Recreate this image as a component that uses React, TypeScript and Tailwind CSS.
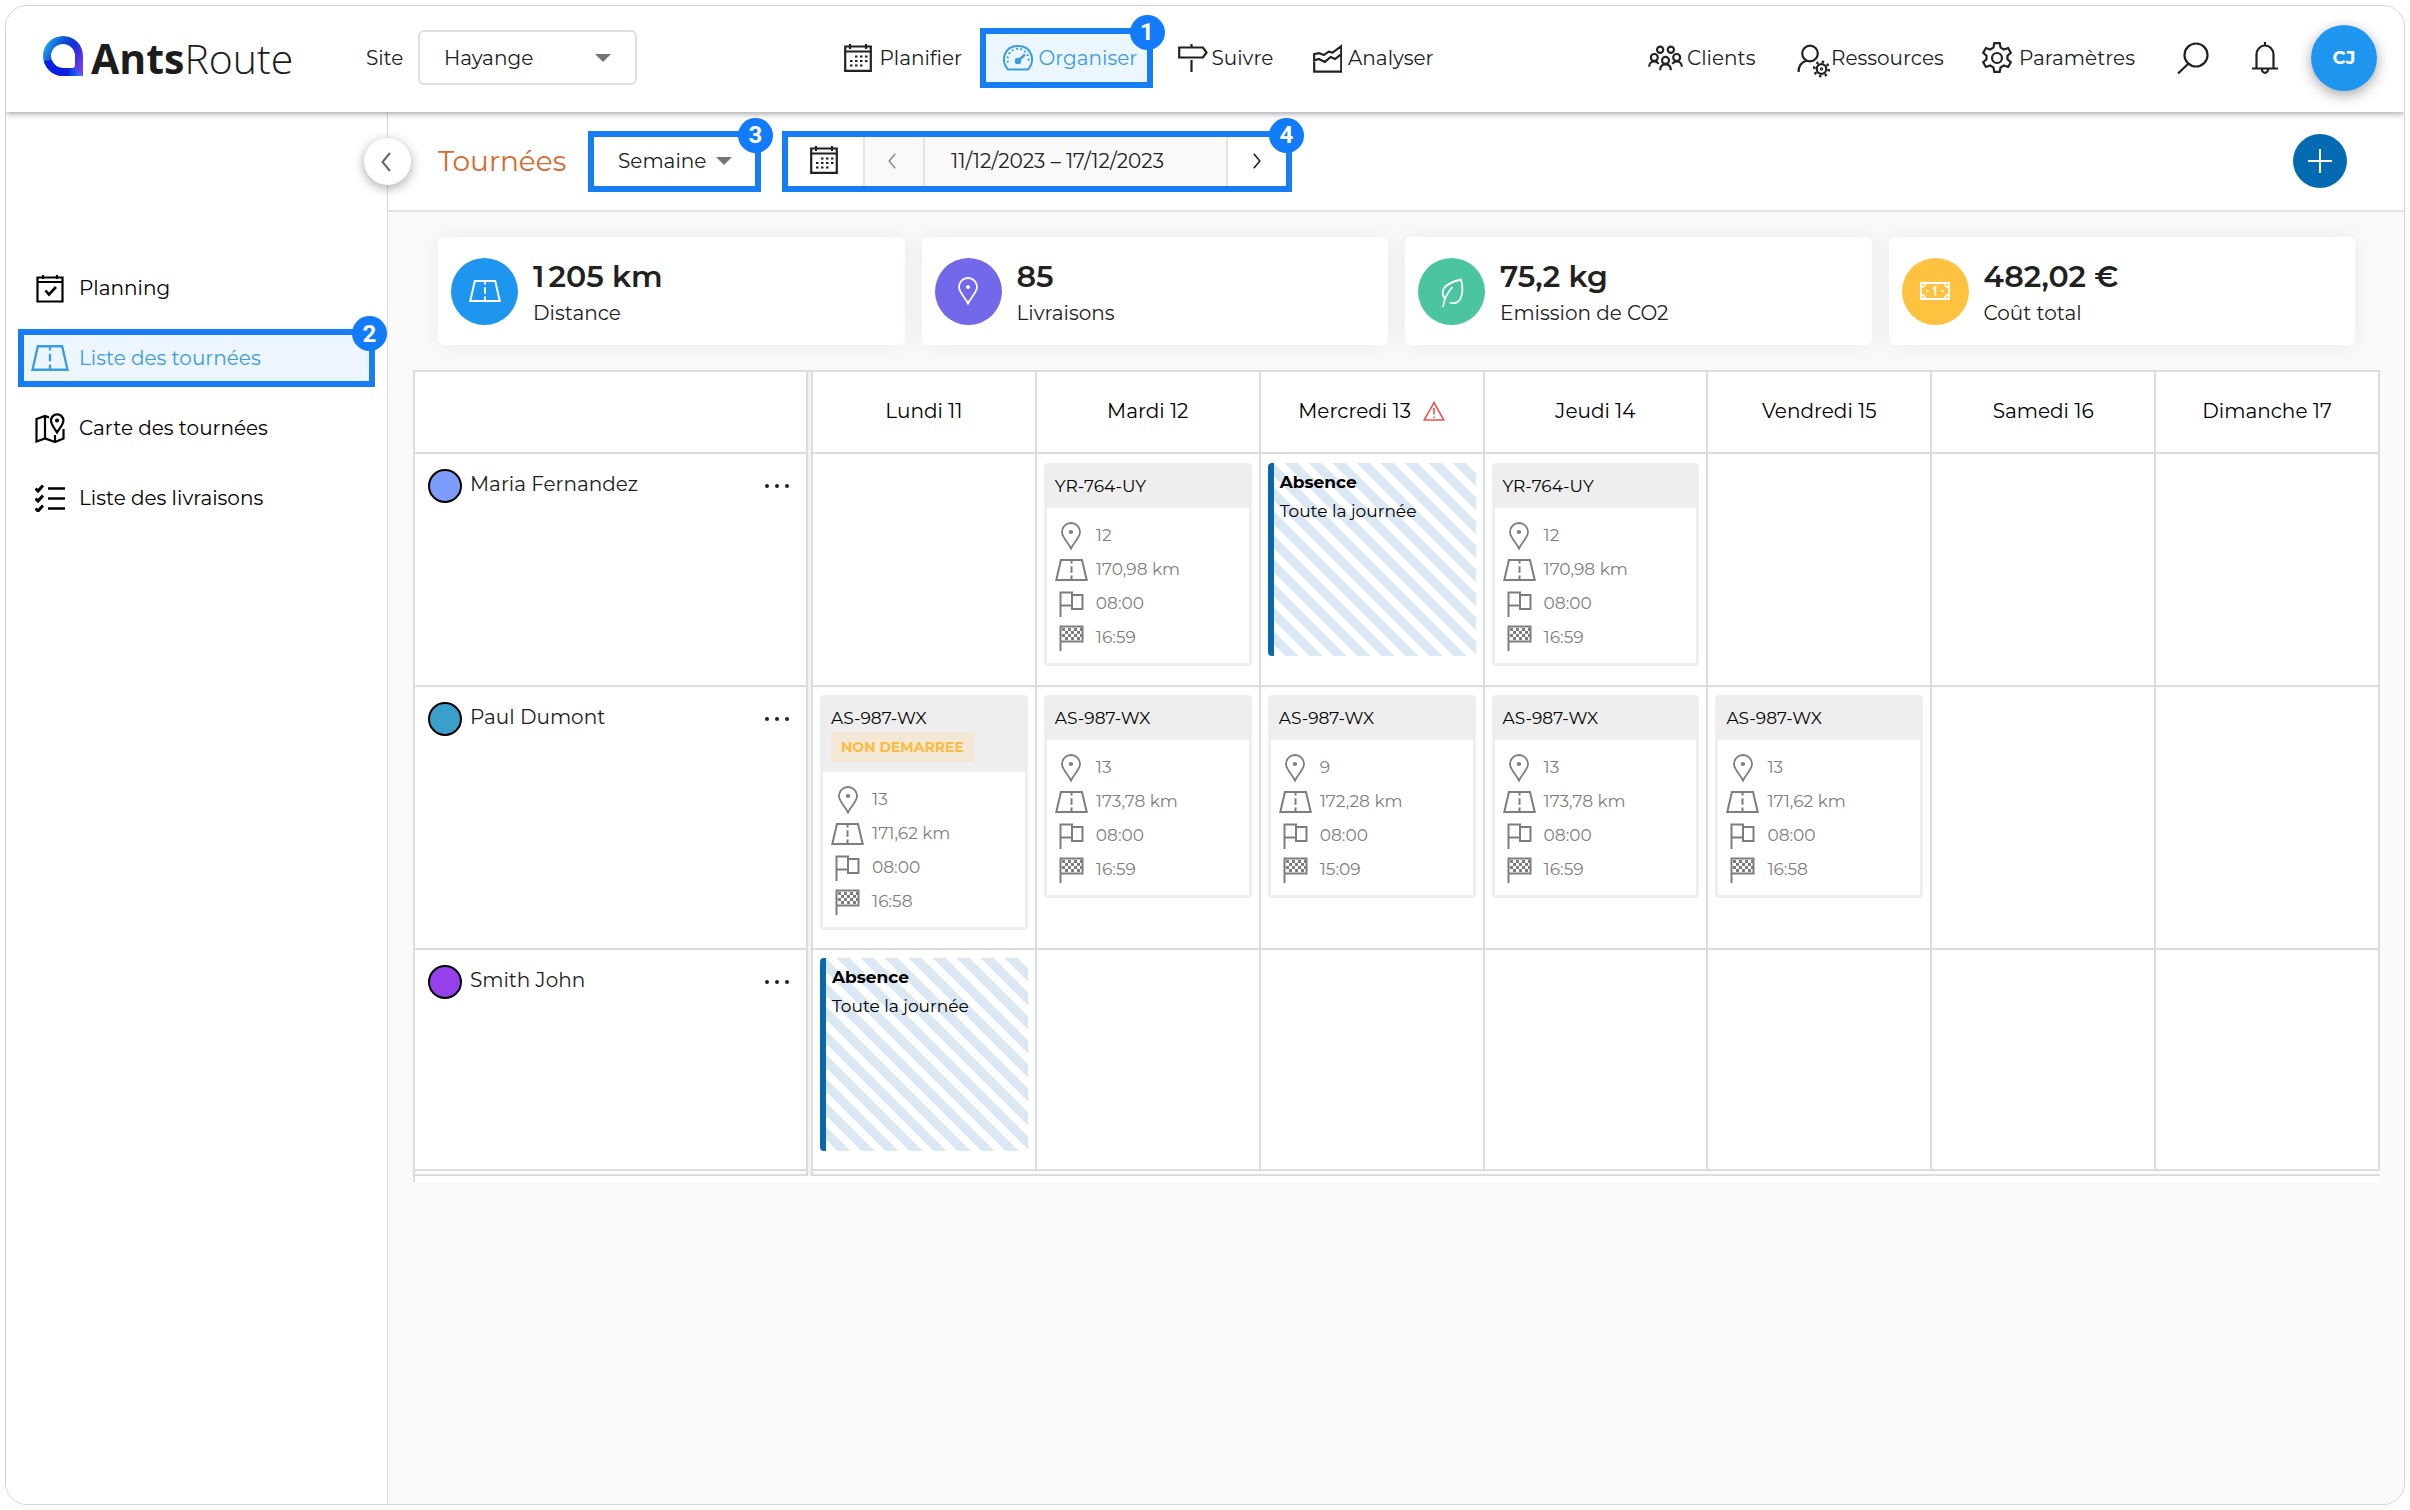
import type { ReactNode } from "react";
import clsx from "clsx";

type Tour = {
  kind: "tour";
  plate: string;
  badge?: string;
  stops: string;
  distance: string;
  start: string;
  end: string;
};

type Absence = { kind: "absence" };

type Driver = {
  name: string;
  dot: string;
  days: (Tour | Absence | null)[];
};

const tour = (plate: string, stops: string, distance: string, end: string, badge?: string): Tour => ({
  kind: "tour",
  plate,
  stops,
  distance,
  start: "08:00",
  end,
  badge,
});

const days = ["Lundi 11", "Mardi 12", "Mercredi 13", "Jeudi 14", "Vendredi 15", "Samedi 16", "Dimanche 17"];

const drivers: Driver[] = [
  {
    name: "Maria Fernandez",
    dot: "bg-[#7b9cfb]",
    days: [
      null,
      tour("YR-764-UY", "12", "170,98 km", "16:59"),
      { kind: "absence" },
      tour("YR-764-UY", "12", "170,98 km", "16:59"),
      null,
      null,
      null,
    ],
  },
  {
    name: "Paul Dumont",
    dot: "bg-[#3a9fcb]",
    days: [
      tour("AS-987-WX", "13", "171,62 km", "16:58", "NON DEMARREE"),
      tour("AS-987-WX", "13", "173,78 km", "16:59"),
      tour("AS-987-WX", "9", "172,28 km", "15:09"),
      tour("AS-987-WX", "13", "173,78 km", "16:59"),
      tour("AS-987-WX", "13", "171,62 km", "16:58"),
      null,
      null,
    ],
  },
  {
    name: "Smith John",
    dot: "bg-[#9540ea]",
    days: [{ kind: "absence" }, null, null, null, null, null, null],
  },
];

const stats = [
  { value: "1\u202f205 km", label: "Distance", color: "bg-[#1e96f0]", icon: <RoadIcon className="h-[22px] w-8" /> },
  { value: "85", label: "Livraisons", color: "bg-[#7367ea]", icon: <PinIcon className="h-7 w-5" /> },
  { value: "75,2 kg", label: "Emission de CO2", color: "bg-[#4bc4a0]", icon: <LeafIcon /> },
  { value: "482,02 €", label: "Coût total", color: "bg-[#fec240]", icon: <MoneyIcon /> },
];

export default function App() {
  return (
    <div className="flex min-h-screen bg-white p-[5px] font-[Montserrat,Inter,sans-serif] text-xl text-[#212121]">
      <div className="flex min-w-0 flex-1 flex-col overflow-hidden rounded-[22px] border border-[#d2d2d2]">
        <Header />
        <div className="flex flex-1">
          <Sidebar />
          <main className="flex min-w-0 flex-1 flex-col bg-[#fafafa]">
            <Toolbar />
            <div className="pt-[25px] pr-6 pl-[25px]">
              <section className="grid grid-cols-4 gap-[17px] px-[25px]">
                {stats.map((stat) => (
                  <div
                    key={stat.label}
                    className="flex h-[108px] items-center gap-[15px] rounded-md bg-white px-[13px] shadow-[0_0_24px_rgba(34,41,60,0.08)]"
                  >
                    <span
                      className={clsx(
                        "flex size-[67px] shrink-0 items-center justify-center rounded-full text-white",
                        stat.color,
                      )}
                    >
                      {stat.icon}
                    </span>
                    <div className="pt-[7px]">
                      <p className="text-[30px] leading-9 font-semibold">{stat.value}</p>
                      <p className="leading-9">{stat.label}</p>
                    </div>
                  </div>
                ))}
              </section>
              <Schedule />
            </div>
          </main>
        </div>
      </div>
    </div>
  );
}

function Header() {
  return (
    <header className="relative z-20 flex h-[106px] shrink-0 items-center justify-between bg-white pr-[27px] pb-[3px] pl-[37px] shadow-[0_2px_6px_rgba(0,0,0,0.35)]">
      <div className="flex items-center">
        <a href="#" className="flex w-[323px] items-center gap-2">
          <LogoMark />
          <span className="pt-0.5 font-['Open_Sans',sans-serif] text-[41px] leading-none text-[#1c1c1c]">
            <span className="font-bold">Ants</span>
            <span className="font-light">Route</span>
          </span>
        </a>
        <label htmlFor="site" className="w-[52px]">
          Site
        </label>
        <span className="relative">
          <select
            id="site"
            className="h-[55px] w-[219px] appearance-none rounded-md border-2 border-[#dfdfdf] bg-white pl-6 outline-none"
          >
            <option>Hayange</option>
          </select>
          <Caret className="pointer-events-none absolute top-6 right-[26px]" />
        </span>
      </div>

      <nav className="mr-2 flex items-center">
        <NavLink className="w-[136px] gap-2" icon={<CalendarIcon className="size-7" />}>
          Planifier
        </NavLink>
        <NavLink
          className="relative mr-[25px] h-[60px] w-[173px] gap-1.5 border-[6px] border-[#167df5] bg-[#ebf6fe] pl-[17px] text-[#3b9be0]"
          icon={<GaugeIcon />}
        >
          Organiser
          <Marker>1</Marker>
        </NavLink>
        <NavLink className="w-[135px] gap-1" icon={<SignpostIcon />}>
          Suivre
        </NavLink>
        <NavLink className="w-[121px] gap-1.5" icon={<AreaIcon />}>
          Analyser
        </NavLink>
      </nav>

      <nav className="flex items-center">
        <NavLink className="w-[149px] gap-1" icon={<GroupIcon />}>
          Clients
        </NavLink>
        <NavLink className="w-[184px]" icon={<UserCogIcon />}>
          Ressources
        </NavLink>
        <NavLink className="w-[196px] gap-1.5" icon={<GearIcon />}>
          Paramètres
        </NavLink>
        <button type="button" aria-label="Rechercher" className="w-[75px]">
          <svg viewBox="0 0 32 32" className="size-8" fill="none" stroke="currentColor" strokeWidth="2.2">
            <circle cx="19" cy="13" r="11.5" />
            <path d="M11.5 21.5 1 31.5" />
          </svg>
        </button>
        <button type="button" aria-label="Notifications" className="w-[59px]">
          <svg viewBox="0 0 26 32" className="h-8 w-[26px]" fill="none" stroke="currentColor" strokeWidth="2.2">
            <path d="M13 0v3M4.5 26V12.500a8.500 9 0 0 1 17 0V26M0 26.500h26M10 27.500a3 3.300 0 0 0 6 0" />
          </svg>
        </button>
        <button
          type="button"
          className="size-[66px] rounded-full bg-[#1e96f0] text-lg font-bold text-white shadow-[0_4px_14px_rgba(0,0,0,0.35)]"
        >
          CJ
        </button>
      </nav>
    </header>
  );
}

function NavLink({ icon, className, children }: { icon: ReactNode; className?: string; children: ReactNode }) {
  return (
    <a href="#" className={clsx("flex items-center whitespace-nowrap", className)}>
      {icon}
      {children}
    </a>
  );
}

function Marker({ children }: { children: ReactNode }) {
  return (
    <span className="absolute -top-[19px] -right-[18px] z-10 flex size-[35px] items-center justify-center rounded-full bg-[#127bfa] font-[Roboto,sans-serif] text-2xl leading-none font-bold text-white">
      {children}
    </span>
  );
}

function Sidebar() {
  const itemClassName = "flex h-[58px] items-center gap-2.5 border-[6px] pl-[7px]";

  return (
    <aside className="relative w-[382px] shrink-0 border-r border-[#dcdcdc] bg-white pt-[147px] pr-3 pl-3">
      <button
        type="button"
        aria-label="Replier le menu"
        className="absolute top-[26px] -right-6 z-10 flex size-[47px] items-center justify-center rounded-full bg-white pr-1 text-[#666] shadow-[0_3px_12px_rgba(0,0,0,0.35)]"
      >
        <Chevron className="h-5 w-2.5" />
      </button>
      <nav className="flex flex-col gap-3 text-black">
        <a href="#" className={clsx(itemClassName, "border-transparent")}>
          <SideIcon>
            <svg viewBox="0 0 28 29" className="h-[29px] w-7" fill="none" stroke="currentColor" strokeWidth="2.2">
              <path d="M1.500 3.500h25v24h-25zM1.500 8h25M7 1v4M21 1v4" />
              <path d="m9.500 16.500 3.500 4 7-7.500" strokeWidth="2.600" />
            </svg>
          </SideIcon>
          Planning
        </a>
        <a href="#" className={clsx(itemClassName, "relative border-[#167df5] bg-[#edf6fe] text-[#3b9be0]")}>
          <SideIcon>
            <RoadIcon className="h-[26px] w-[38px]" />
          </SideIcon>
          Liste des tournées
          <Marker>2</Marker>
        </a>
        <a href="#" className={clsx(itemClassName, "border-transparent")}>
          <SideIcon>
            <svg viewBox="0 0 30 30" className="size-[30px]" fill="none" stroke="currentColor" strokeWidth="2.200">
              <path d="M14 4.500 10 3 1.500 6v22.500L10 25.500l10 3.500 8.500-3.500V16M10 3v22.500M20 22v7" />
              <path d="M22 19.500c-3-5-6-8-6-12a6.200 6.200 0 0 1 12.400 0c0 4-3.400 7-6.400 12z" />
              <circle cx="22" cy="7.500" r="1" fill="currentColor" />
            </svg>
          </SideIcon>
          Carte des tournées
        </a>
        <a href="#" className={clsx(itemClassName, "border-transparent")}>
          <SideIcon>
            <svg viewBox="0 0 30 28" className="h-7 w-[30px]" fill="none" stroke="currentColor" strokeWidth="2.600">
              <path d="M13 4.500h17M13 14.500h17M13 24.500h17" />
              <path d="m.5 4.500 2.500 2.500L8 1.500M.5 14.500 3 17l5-5.500M.5 24.500 3 27l5-5.500" strokeWidth="3" />
            </svg>
          </SideIcon>
          Liste des livraisons
        </a>
      </nav>
    </aside>
  );
}

function SideIcon({ children }: { children: ReactNode }) {
  return <span className="flex w-[38px] shrink-0 justify-center">{children}</span>;
}

function Toolbar() {
  return (
    <div className="flex h-[100px] shrink-0 items-center border-b-2 border-[#e2e2e2] bg-white pr-[57px] pl-[50px]">
      <h1 className="w-[150px] pt-0.5 text-[28px] text-[#d9692f]">Tournées</h1>

      <div className="relative h-[61px] w-[173px] border-[6px] border-[#167df5]">
        <select aria-label="Période" className="size-full appearance-none bg-white pl-6 outline-none">
          <option>Semaine</option>
        </select>
        <Caret className="pointer-events-none absolute top-5 right-[23px]" />
        <Marker>3</Marker>
      </div>

      <div className="relative ml-[21px] flex h-[61px] w-[510px] border-[6px] border-[#167df5]">
        <button type="button" aria-label="Calendrier" className="flex w-[75px] items-center justify-center pr-1 pb-0.5">
          <CalendarIcon className="size-7" />
        </button>
        <button
          type="button"
          aria-label="Semaine précédente"
          className="flex w-[62px] items-center justify-center border-x-2 border-[#e4e4e4] bg-[#f9f9f9] pr-1 text-[#8c8c8c]"
        >
          <Chevron className="h-4 w-2.5" />
        </button>
        <button type="button" className="flex-1 border-r-2 border-[#e4e4e4] bg-[#f9f9f9] pr-9">
          11/12/2023 – 17/12/2023
        </button>
        <button type="button" aria-label="Semaine suivante" className="flex w-[58px] items-center justify-center">
          <Chevron className="h-4 w-2.5 rotate-180" />
        </button>
        <Marker>4</Marker>
      </div>

      <button
        type="button"
        aria-label="Ajouter une tournée"
        className="ml-auto flex size-[54px] items-center justify-center rounded-full bg-[#046ab1] text-white"
      >
        <svg viewBox="0 0 24 24" className="size-6" fill="none" stroke="currentColor" strokeWidth="2">
          <path d="M12 0v24M0 12h24" />
        </svg>
      </button>
    </div>
  );
}

function Schedule() {
  return (
    <div className="mt-[25px] border-t-2 border-l-2 border-[#dcdcdc] bg-white pb-1.5">
      <table className="w-full table-fixed border-separate border-spacing-0">
        <colgroup>
          <col className="w-[391px]" />
          <col className="w-[7px]" />
        </colgroup>
        <thead>
          <tr className="h-[82px]">
            <td className="border-b-2 border-[#dcdcdc]" />
            <Gutter />
            {days.map((day) => (
              <th
                key={day}
                scope="col"
                className="border-r-2 border-b-2 border-[#dcdcdc] pb-0.5 font-normal text-black"
              >
                <span className="flex items-center justify-center gap-3">
                  {day}
                  {day === "Mercredi 13" && <WarningIcon />}
                </span>
              </th>
            ))}
          </tr>
        </thead>
        <tbody>
          {drivers.map((driver) => (
            <tr key={driver.name} className="group align-top">
              <th scope="row" className="border-b-2 border-[#dcdcdc] pt-[15px] pr-[17px] pl-[13px] text-left font-normal">
                <div className="flex items-center gap-2">
                  <span className={clsx("size-[34px] shrink-0 rounded-full border-2 border-black", driver.dot)} />
                  <span className="pb-1">{driver.name}</span>
                  <button type="button" aria-label={`Options ${driver.name}`} className="ml-auto">
                    <svg viewBox="0 0 24 6" className="h-1.5 w-6" fill="currentColor">
                      <circle cx="2" cy="3" r="2" />
                      <circle cx="12" cy="3" r="2" />
                      <circle cx="22" cy="3" r="2" />
                    </svg>
                  </button>
                </div>
              </th>
              <Gutter />
              {driver.days.map((entry, i) => (
                <td
                  key={days[i]}
                  className="border-r-2 border-b-2 border-[#dcdcdc] px-[7px] pt-2 pb-[18px] group-first:pt-[9px] group-first:pb-[19px]"
                >
                  {entry?.kind === "tour" && <TourCard tour={entry} />}
                  {entry?.kind === "absence" && <AbsenceCard />}
                </td>
              ))}
            </tr>
          ))}
          <tr className="h-[5px]" aria-hidden="true">
            <td className="border-b-2 border-[#dcdcdc]" />
            <Gutter />
            <td colSpan={7} className="border-b-2 border-[#dcdcdc]" />
          </tr>
        </tbody>
      </table>
    </div>
  );
}

function Gutter() {
  return <td className="border-x-2 border-[#dcdcdc] bg-[#f2f2f2] p-0" />;
}

function TourCard({ tour }: { tour: Tour }) {
  return (
    <article className="rounded-sm border-[3px] border-[#eee] bg-white text-[17px]">
      <div className="bg-[#eee] px-2 pt-2 pb-2.5 text-black">
        <p className="leading-6">{tour.plate}</p>
        {tour.badge && (
          <p className="mt-0.5 inline-flex h-[30px] items-center bg-[#f3e8d5] px-2.5 text-sm font-bold text-[#fbbc42]">
            {tour.badge}
          </p>
        )}
      </div>
      <ul className="pt-[11px] pb-2 pl-2 text-[#7d7d7d]">
        <TourLine icon={<PinIcon className="h-7 w-5" />}>{tour.stops}</TourLine>
        <TourLine icon={<RoadIcon className="h-[22px] w-[33px]" />}>{tour.distance}</TourLine>
        <TourLine icon={<FlagIcon />}>{tour.start}</TourLine>
        <TourLine icon={<FinishIcon />}>{tour.end}</TourLine>
      </ul>
    </article>
  );
}

function TourLine({ icon, children }: { icon: ReactNode; children: ReactNode }) {
  return (
    <li className="flex h-[34px] items-center gap-2">
      <span className="flex w-[33px] justify-center">{icon}</span>
      {children}
    </li>
  );
}

function AbsenceCard() {
  return (
    <article className="h-[193px] rounded-l-sm border-l-[6px] border-[#0a69ac] bg-[repeating-linear-gradient(45deg,transparent_0px,transparent_8px,#dae8f3_8px,#dae8f3_17px)] px-1.5 pt-[5px] text-[17px] leading-[29px] text-black">
      <p className="font-bold">Absence</p>
      <p>Toute la journée</p>
    </article>
  );
}

function LogoMark() {
  return (
    <svg viewBox="0 0 40 40" className="mb-1 size-10">
      <defs>
        <linearGradient id="logo-fill" x1="0" y1="0.2" x2="1" y2="0.8">
          <stop offset="0" stopColor="#22b4f4" />
          <stop offset="0.35" stopColor="#0b4fd0" />
          <stop offset="0.6" stopColor="#1a2bd8" />
          <stop offset="1" stopColor="#7a3df0" />
        </linearGradient>
        <linearGradient id="logo-base" x1="0" y1="0" x2="1" y2="0">
          <stop offset="0" stopColor="#0a1fe0" />
          <stop offset="0.6" stopColor="#0a1fe0" />
          <stop offset="1" stopColor="#3f8cf5" />
        </linearGradient>
      </defs>
      <path
        fill="url(#logo-fill)"
        fillRule="evenodd"
        d="M20 0a20 20 0 0 1 20 20v20H20a20 20 0 0 1 0-40zm0 8a12 12 0 1 0 0 24h9q3 0 3-3v-9A12 12 0 0 0 20 8z"
      />
      <path fill="url(#logo-base)" d="M1 25a20 20 0 0 0 19 15h20l-8-8H20a12 12 0 0 1-11-8z" />
    </svg>
  );
}

function Caret({ className }: { className?: string }) {
  return (
    <svg viewBox="0 0 16 8" className={clsx("h-2 w-4", className)} fill="#757575">
      <path d="M0 0h16L8 8z" />
    </svg>
  );
}

function Chevron({ className }: { className?: string }) {
  return (
    <svg viewBox="0 0 10 20" className={className} fill="none" stroke="currentColor" strokeWidth="2">
      <path d="M9 1 1.500 10 9 19" />
    </svg>
  );
}

function CalendarIcon({ className }: { className?: string }) {
  return (
    <svg viewBox="0 0 28 28" className={className} fill="none" stroke="currentColor" strokeWidth="2.200">
      <path d="M1.200 2.500h25.600v24.300H1.200zM1.200 7.500h25.600M6 0v5M22 0v5" />
      <path d="M11 12.500h12.500M6 17h17.500M6 21.500h12.500" strokeDasharray="2.500 2.500" />
    </svg>
  );
}

function GaugeIcon() {
  return (
    <svg viewBox="0 0 30 26" className="h-[26px] w-[30px]" fill="none" stroke="currentColor" strokeWidth="2">
      <path d="M5 24.500C-2.500 16 .5 1 15 1s17.500 15 10 23.500z" />
      <path d="M5 17.500a10.500 10.500 0 1 1 20 0" strokeDasharray="1.800 2.600" />
      <circle cx="15" cy="16" r="2.200" fill="currentColor" />
      <path d="m15 16 7-6.500" strokeWidth="2.400" />
    </svg>
  );
}

function SignpostIcon() {
  return (
    <svg viewBox="0 0 30 28" className="h-7 w-[30px]" fill="none" stroke="currentColor" strokeWidth="2.200">
      <path d="M1.200 3.500H25l3.500 5-3.500 5H1.200zM13.500 0v3.500M13.500 16V28" />
    </svg>
  );
}

function AreaIcon() {
  return (
    <svg viewBox="0 0 30 30" className="size-[30px]" fill="none" stroke="currentColor" strokeWidth="2.200">
      <path d="M1.200 11v17.800h27.600V3L20 9.500l-4-1-5 3.500-5-2zM1.200 11v6.500L6 16l6 3 6-5 4.500 2 6.300-5" />
    </svg>
  );
}

function GroupIcon() {
  return (
    <svg viewBox="0 0 36 26" className="h-[26px] w-[35px]" fill="none" stroke="currentColor" strokeWidth="2.200">
      <circle cx="12.500" cy="4.500" r="3.200" />
      <circle cx="23.500" cy="4.500" r="3.200" />
      <circle cx="6.500" cy="12.500" r="3.600" />
      <circle cx="29.500" cy="12.500" r="3.600" />
      <circle cx="18" cy="15.500" r="3.600" />
      <path d="M1.200 22c0-3 2-5.500 5.300-5.500 2 0 3.500 1 4.500 2.500M34.800 22c0-3-2-5.500-5.300-5.500-2 0-3.500 1-4.500 2.500M12.500 25.500c0-3.500 2-6 5.500-6s5.500 2.500 5.500 6" />
    </svg>
  );
}

function UserCogIcon() {
  return (
    <svg viewBox="0 0 34 34" className="mt-1.5 size-[34px]" fill="none" stroke="currentColor" strokeWidth="2.200">
      <circle cx="13" cy="9.500" r="7.800" />
      <path d="M1.500 28c0-6 3-10 8.500-11.500" />
      <circle cx="24.500" cy="25" r="4.800" />
      <circle cx="24.500" cy="25" r="7.300" strokeWidth="2.600" strokeDasharray="2.400 3.330" />
      <circle cx="24.500" cy="25" r="0.600" />
    </svg>
  );
}

function GearIcon() {
  return (
    <svg viewBox="0 0 32 32" className="size-8" fill="none" stroke="currentColor" strokeWidth="2.200">
      <circle cx="16" cy="16" r="5" />
      <path d="M13.300 1.200h5.400l.9 4.400 3.300 1.900 4.200-1.500 2.700 4.700-3.300 3v3.600l3.300 3-2.700 4.700-4.200-1.500-3.300 1.900-.9 4.400h-5.400l-.9-4.400-3.300-1.900L4.900 25l-2.700-4.700 3.300-3v-3.600l-3.300-3L4.900 6l4.200 1.500 3.300-1.900z" />
    </svg>
  );
}

function RoadIcon({ className }: { className?: string }) {
  return (
    <svg
      viewBox="0 0 36 24"
      preserveAspectRatio="none"
      className={className}
      fill="none"
      stroke="currentColor"
      strokeWidth="2.200"
    >
      <path d="M6.500 1.200h23L34.600 22.800H1.400z" />
      <path d="M18 1v4M18 8v7M18 18v5" />
    </svg>
  );
}

function PinIcon({ className }: { className?: string }) {
  return (
    <svg viewBox="0 0 20 28" className={className} fill="none" stroke="currentColor" strokeWidth="1.800">
      <path d="M10 26.500C7 20 1 15.500 1 10a9 9 0 0 1 18 0c0 5.500-6 10-9 16.500z" />
      <circle cx="10" cy="10" r="1.200" fill="currentColor" />
    </svg>
  );
}

function LeafIcon() {
  return (
    <svg viewBox="0 0 24 30" className="mt-1 h-[30px] w-6" fill="none" stroke="currentColor" strokeWidth="1.800">
      <path d="M3 29c1-8 4-14 9.500-20M5 21C0 14 2 6 21 1.500 25 17 20 28 9.500 24.500" />
    </svg>
  );
}

function MoneyIcon() {
  return (
    <svg viewBox="0 0 30 18" className="h-[18px] w-[30px]" fill="none" stroke="currentColor" strokeWidth="1.800">
      <path d="M1 1h28v16H1z" />
      <path d="M1.500 5Q5 5 5 1.500M25 1.500Q25 5 28.500 5M28.500 13Q25 13 25 16.500M5 16.500Q5 13 1.500 13" />
      <path d="m13 7 2.300-2v8.500" />
      <path d="M6.500 9h2M21.500 9h2" strokeWidth="2" />
    </svg>
  );
}

function WarningIcon() {
  return (
    <svg viewBox="0 0 22 20" className="h-5 w-[22px]" fill="none" stroke="#e8564f" strokeWidth="1.600">
      <path d="M11 1.500 20.800 19H1.200zM11 7v6.500M11 15.500v1.500" />
    </svg>
  );
}

function FlagIcon() {
  return (
    <svg viewBox="0 0 25 26" className="h-[26px] w-[25px]" fill="none" stroke="currentColor" strokeWidth="2">
      <path d="M1.500 26V1.500h11.500v13H1.500M13 4h10.500v14H13v-3.500" />
    </svg>
  );
}

function FinishIcon() {
  return (
    <svg viewBox="0 0 25 26" className="h-[26px] w-[25px]" fill="none" stroke="currentColor" strokeWidth="2">
      <path d="M1.500 26V1.500h22v15h-22" />
      <path d="M3 4.500h20M3 10.500h20" strokeWidth="3" strokeDasharray="3 3" />
      <path d="M6 7.500h17M6 13.500h17" strokeWidth="3" strokeDasharray="3 3" />
    </svg>
  );
}
